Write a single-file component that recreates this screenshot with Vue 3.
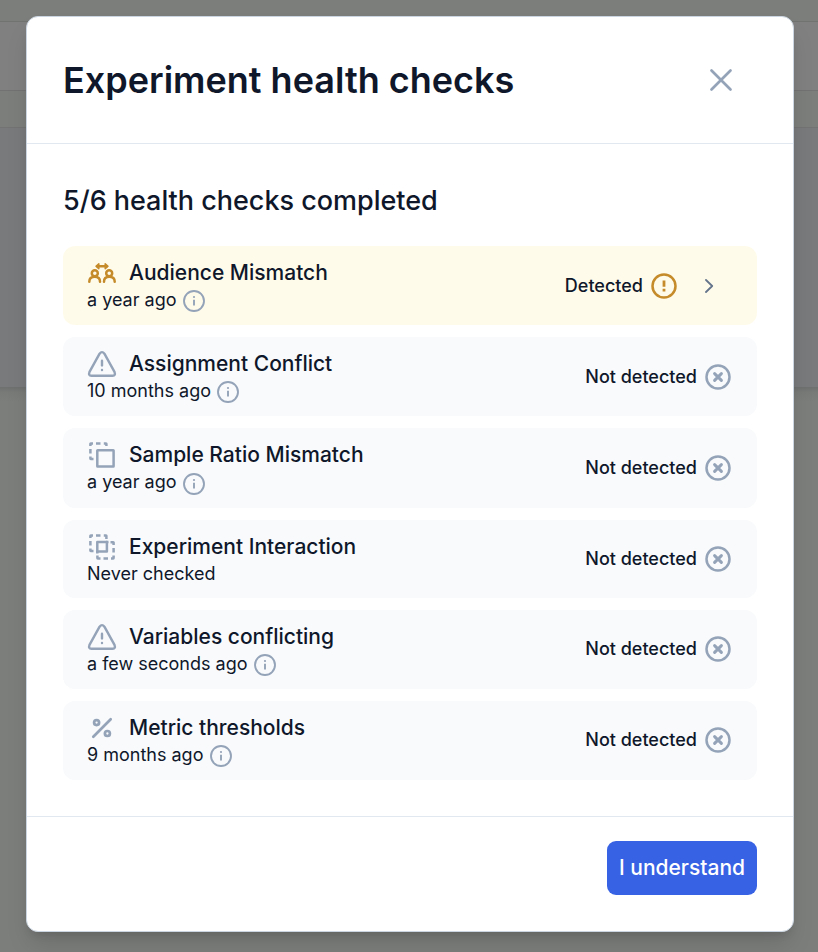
<script setup>
const checks = [
  { id: 'audience', icon: 'people', title: 'Audience Mismatch', time: 'a year ago', info: true, detected: true },
  { id: 'assignment', icon: 'triangle', title: 'Assignment Conflict', time: '10 months ago', info: true },
  { id: 'ratio', icon: 'overlap', title: 'Sample Ratio Mismatch', time: 'a year ago', info: true },
  { id: 'interaction', icon: 'intersect', title: 'Experiment Interaction', time: 'Never checked', info: false },
  { id: 'variables', icon: 'triangle', title: 'Variables conflicting', time: 'a few seconds ago', info: true },
  { id: 'metrics', icon: 'percent', title: 'Metric thresholds', time: '9 months ago', info: true },
]
</script>

<template>
  <div class="page">
    <div class="band band-top"></div>
    <div class="band band-nav"></div>
    <div class="band band-tabs"></div>
    <div class="band band-hero"></div>
    <div class="band band-rest"></div>

    <section class="modal" role="dialog">
      <header class="head">
        <h1>Experiment health checks</h1>
        <button class="close" aria-label="Close">
          <svg width="24" height="24" viewBox="0 0 24 24"><path d="M2.500 2.500L21.500 21.500M21.500 2.500L2.500 21.500" /></svg>
        </button>
      </header>

      <main class="body">
        <h2>5/6 health checks completed</h2>
        <ul class="list">
          <li v-for="c in checks" :key="c.id" class="row" :class="[c.id, { detected: c.detected }]">
            <div class="left">
              <div class="name">
                <svg class="icon" width="30" height="30" viewBox="0 0 30 30">
                  <g v-if="c.icon === 'people'" stroke-width="2.500">
                    <circle cx="7.800" cy="15.300" r="3" />
                    <circle cx="22.200" cy="15.300" r="3" />
                    <path d="M2.300 23.700c0-3.200 2.200-5 5.500-5s5.200 1.800 5.200 5M17 23.700c0-3.200 1.900-5 5.200-5s5.500 1.800 5.500 5" />
                    <path d="M10.500 8.300h9" />
                    <path d="M9 8.300l2.800-2.500v5zM21 8.300l-2.800-2.500v5z" fill="currentColor" stroke-width="1.500" />
                  </g>
                  <g v-else-if="c.icon === 'triangle'">
                    <path stroke-width="2.400" d="M12.600 4.700L2.500 22.800Q1.100 26.800 4.400 26.800H25.600Q28.900 26.800 27.500 22.800L17.400 4.700Q15 1.600 12.600 4.700Z" />
                    <path stroke-width="2.400" d="M15 11.800v4.600M15 21v.1" />
                  </g>
                  <g v-else-if="c.icon === 'overlap'" stroke-width="2.500">
                    <path stroke-linecap="butt" d="M3.400 6V3.800Q3.400 3.400 3.800 3.400H6M9 3.400h4.500M16.800 3.400H19q.4 0 .4.400V6M3.400 9v4.500M3.400 16.500V18.500q0 .4.400.4H6.500" />
                    <rect x="10.300" y="10.200" width="16.300" height="16.300" rx=".3" />
                  </g>
                  <g v-else-if="c.icon === 'intersect'" stroke-width="2.500">
                    <path stroke-linecap="butt" d="M3.400 6V3.800Q3.400 3.400 3.800 3.400H6M9 3.400h4.500M16.800 3.400H19q.4 0 .4.400V7M3.400 9v4.500M3.400 16.500V18.500q0 .4.400.4H6.500" />
                    <rect x="10.300" y="10" width="9.600" height="9.400" />
                    <path stroke-linecap="butt" d="M19 10h2.500M10.300 19v2.500M23.500 10.200h2.700q.4 0 .4.400V13M26.600 16v4.500M26.600 23.500V26q0 .4-.4.400H24M16.500 26.400H21M13.500 26.400h-2.700q-.4 0-.4-.4V23.500" />
                  </g>
                  <g v-else stroke-width="2.700">
                    <circle cx="9.600" cy="9.600" r="2.500" />
                    <circle cx="20.400" cy="20.500" r="2.500" />
                    <path d="M23.700 6.200L6.300 23.800" />
                  </g>
                </svg>
                <span class="label">{{ c.title }}</span>
              </div>
              <div class="time">
                <span>{{ c.time }}</span>
                <svg v-if="c.info" class="info" width="22" height="22" viewBox="0 0 22 22">
                  <circle cx="11" cy="11" r="10" stroke-width="1.900" />
                  <path d="M11 9.800v5.600" stroke-width="1.900" stroke-linecap="butt" />
                  <circle cx="11" cy="7" r="1.100" fill="currentColor" stroke="none" />
                </svg>
              </div>
            </div>
            <div class="status">
              <span>{{ c.detected ? 'Detected' : 'Not detected' }}</span>
              <svg class="state" width="26" height="26" viewBox="0 0 26 26" stroke-width="2.500">
                <circle cx="13" cy="13" r="11.500" />
                <path v-if="c.detected" stroke-width="2.800" stroke-linecap="butt" d="M13 7.500v6.200M13 15.800v2.600" />
                <path v-else stroke-width="3" d="M9.600 9.600l6.800 6.800M16.400 9.600l-6.800 6.800" />
              </svg>
              <svg v-if="c.detected" class="chevron" width="10" height="14" viewBox="0 0 10 14"><path d="M2 1l6.200 6-6.200 6" /></svg>
            </div>
          </li>
        </ul>
      </main>

      <footer class="foot"><button class="confirm">I understand</button></footer>
    </section>
  </div>
</template>

<style>
body { margin: 0; overflow: hidden; }
</style>

<style scoped>
* { box-sizing: border-box; }
.page {
  position: relative;
  width: 818px;
  height: 952px;
  overflow: hidden;
  display: flex;
  flex-direction: column;
  background: #7c7e7c;
  font-family: Inter, "Liberation Sans", sans-serif;
  color: #0f172a;
}
.band { flex: none; background: #7c7e7c; }
.band-top { height: 22px; border-bottom: 1px solid #717371; }
.band-nav { height: 69px; background: #808080; border-bottom: 1px solid #727272; }
.band-tabs { height: 37px; border-bottom: 1px solid #727372; }
.band-hero { height: 259px; background: #797a7c; }
.band-rest { flex: 1; background: linear-gradient(#6e706f, #787a78 5px, #7c7e7c 14px); }
.modal {
  position: absolute;
  left: 26px;
  top: 16px;
  width: 768px;
  height: 916px;
  display: flex;
  flex-direction: column;
  border: 1px solid #cbd5e1;
  border-radius: 12px;
  background: #fff;
  box-shadow: 0 15px 25px -4px rgba(0, 0, 0, .13), 0 6px 9px -4px rgba(0, 0, 0, .12);
}
h1, h2, ul { margin: 0; padding: 0; }
.head {
  height: 127px;
  padding: 0 60px 0 36px;
  display: flex;
  align-items: center;
  justify-content: space-between;
  border-bottom: 1px solid #e2e8f0;
}
h1 { font-size: 36px; line-height: 40px; font-weight: 600; }
button { border: 0; padding: 0; background: none; font: inherit; }
svg { display: block; flex: none; fill: none; stroke: currentColor; stroke-linecap: round; stroke-linejoin: round; }
.close { color: #94a3b8; }
.close svg { stroke-width: 2.700; }
.body { padding: 39px 36px 0; height: 672px; }
h2 { font-size: 27px; line-height: 36px; font-weight: 500; letter-spacing: -.02px; }
.list { margin-top: 27px; list-style: none; display: flex; flex-direction: column; gap: 12px; }
.row {
  height: 79px;
  padding: 0 26px 0 24px;
  display: flex;
  justify-content: space-between;
  align-items: center;
  border-radius: 12px;
  background: #f8fafc;
}
.row.ratio { height: 80px; }
.row.interaction { height: 78px; }
.row.detected { background: #fffbeb; padding-right: 43px; }
.left { align-self: flex-start; padding-top: 12px; }
.name { height: 30px; display: flex; align-items: center; gap: 12px; font-size: 21px; font-weight: 500; }
.label { padding-bottom: 2px; }
.icon { color: #94a3b8; }
.time { height: 24px; display: flex; align-items: center; gap: 6px; font-size: 18px; line-height: 24px; }
.metrics .time { gap: 7px; }
.info { color: #94a3b8; margin-top: 2px; }
.ratio .info { margin-top: 4px; }
.status { display: flex; align-items: center; font-size: 18px; font-weight: 500; }
.variables .status, .metrics .status { margin-bottom: 1px; }
.ratio .status span, .interaction .status span, .variables .status span, .metrics .status span { padding-bottom: 1px; }
.state { margin-left: 8px; color: #94a3b8; }
.detected .icon, .detected .state { color: #c58b2a; }
.chevron { margin-left: 27px; color: #64748b; stroke-width: 1.800; }
.foot {
  flex: 1;
  padding: 24px 36px 0;
  display: flex;
  justify-content: flex-end;
  align-items: flex-start;
  border-top: 1px solid #e2e8f0;
}
.confirm { width: 150px; height: 54px; padding-bottom: 2px; border-radius: 9px; background: #3862e4; color: #fff; font-size: 21px; font-weight: 500; }
</style>
